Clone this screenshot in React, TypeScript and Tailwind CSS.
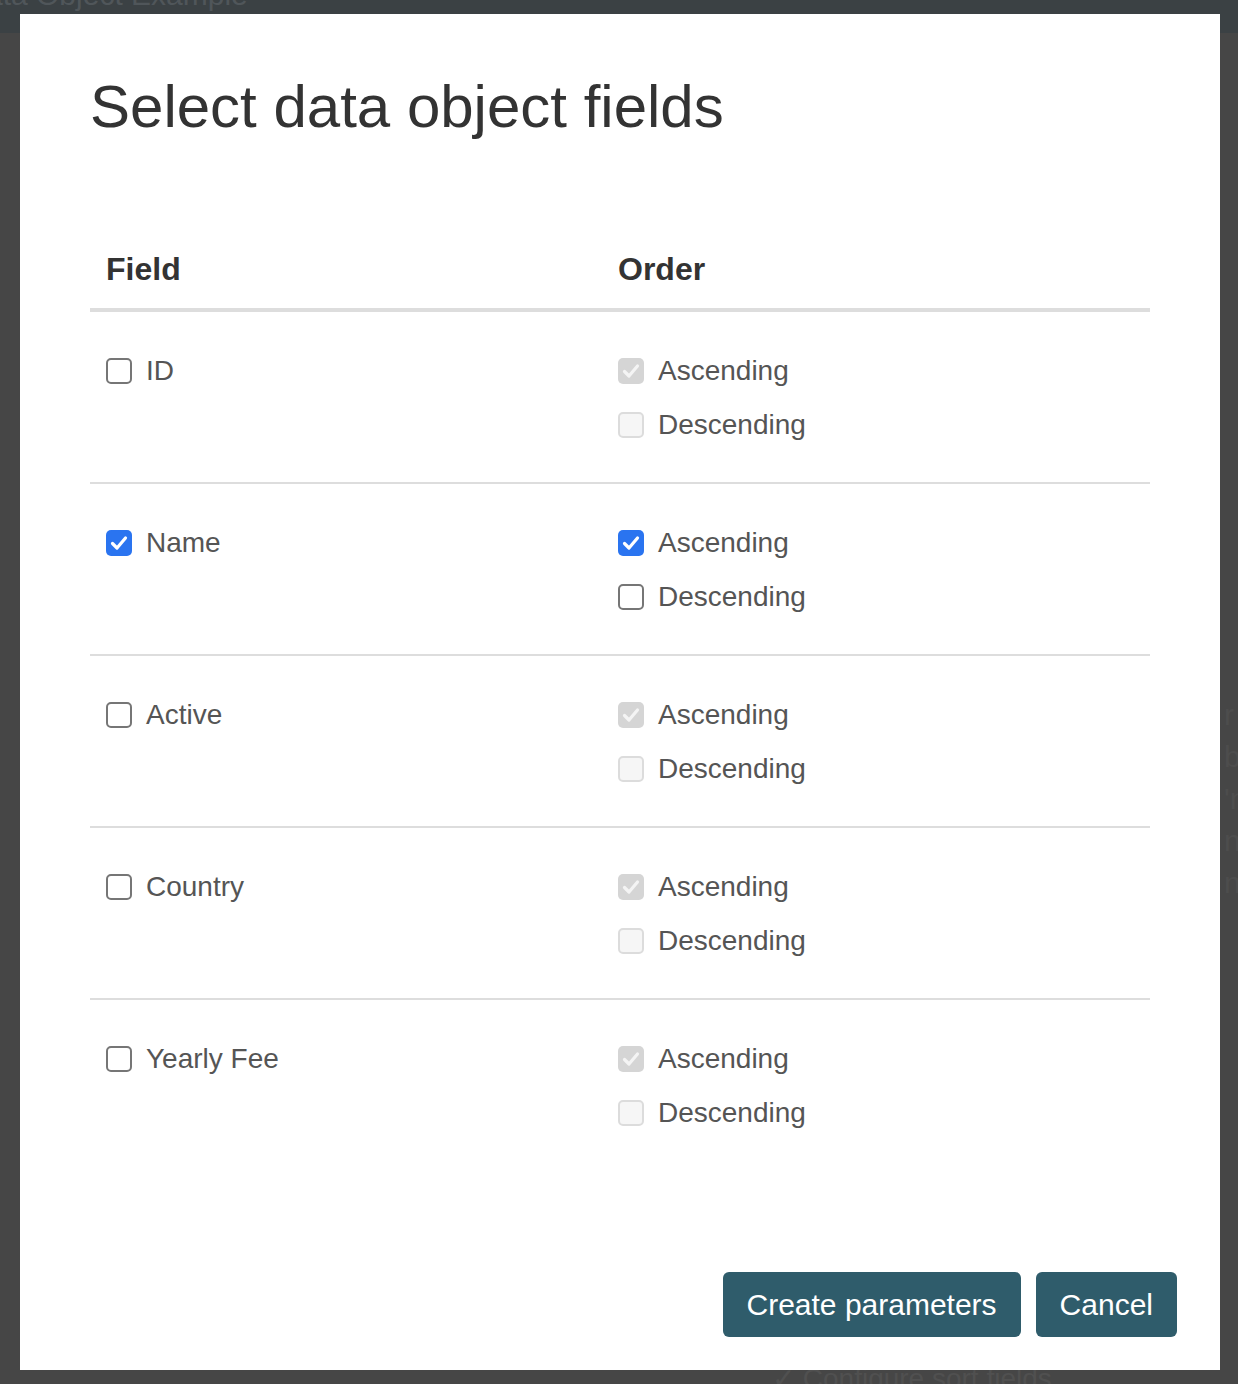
import React from 'react';

type BoxState = 'off' | 'on' | 'disabledOn' | 'disabledOff';

function Check({ color }: { color: string }) {
  return (
    <svg viewBox="0 0 26 26" className="w-[26px] h-[26px]">
      <path d="M6.5 13.5 L11 18 L19.5 8" fill="none" stroke={color} strokeWidth="3.2" strokeLinecap="round" strokeLinejoin="round" />
    </svg>
  );
}

function Box({ state }: { state: BoxState }) {
  if (state === 'on') {
    return (
      <span className="w-[26px] h-[26px] rounded-[5px] bg-[#2a74f0] flex shrink-0">
        <Check color="#ffffff" />
      </span>
    );
  }
  if (state === 'disabledOn') {
    return (
      <span className="w-[26px] h-[26px] rounded-[5px] bg-[#d5d5d5] flex shrink-0">
        <Check color="#f4f4f4" />
      </span>
    );
  }
  if (state === 'disabledOff') {
    return <span className="w-[26px] h-[26px] rounded-[5px] bg-[#f6f6f6] border-2 border-[#dcdcdc] shrink-0" />;
  }
  return <span className="w-[26px] h-[26px] rounded-[5px] bg-white border-2 border-[#767676] shrink-0" />;
}

function Option({ state, label }: { state: BoxState; label: string }) {
  return (
    <div className="h-10 flex items-center gap-[14px] text-[28px] leading-10 text-[#555555]">
      <Box state={state} />
      <span>{label}</span>
    </div>
  );
}

const fields = [
  { name: 'ID', checked: false },
  { name: 'Name', checked: true },
  { name: 'Active', checked: false },
  { name: 'Country', checked: false },
  { name: 'Yearly Fee', checked: false },
];

export default function App() {
  return (
    <div
      className="relative w-full h-[1384px] overflow-hidden bg-[#464646]"
      style={{ fontFamily: '"Liberation Sans", Arial, sans-serif' }}
    >
      {/* page behind the backdrop */}
      <div className="absolute top-0 left-0 right-0 h-[33px] bg-[#3b4144] overflow-hidden">
        <span className="absolute left-[-14px] top-[-28px] text-[30px] text-[#50565a]">ata Object Example</span>
      </div>
      <span className="absolute left-[772px] top-[1358px] text-[28px] text-[#505050]">✓ Configure sort fields</span>
      <div className="absolute left-[1224px] top-[700px] flex flex-col gap-[12px] text-[30px] leading-[30px] text-[#4d4d4d]">
        <span>r f</span>
        <span>bje</span>
        <span>'n</span>
        <span>n</span>
        <span>ns</span>
      </div>

      <div className="relative mt-[14px] ml-[20px] w-[1200px] h-[1356px] bg-white flex flex-col">
        <h1 className="px-[70px] mt-[60px] text-[60px] leading-[66px] text-[#333333]">Select data object fields</h1>

        <div className="mx-[70px] mt-[90px]">
          <div className="grid grid-cols-[512px_1fr] border-b-4 border-[#dddddd] text-[32px] leading-[46px] font-bold text-[#333333]">
            <div className="px-4 pt-4 pb-[16px]">Field</div>
            <div className="px-4 pt-4 pb-[16px]">Order</div>
          </div>
          {fields.map((f, i) => (
            <div
              key={f.name}
              className={`grid grid-cols-[512px_1fr] pt-[39px] pb-[37px] ${i < fields.length - 1 ? 'border-b-2 border-[#dddddd]' : ''}`}
            >
              <div className="px-4">
                <Option state={f.checked ? 'on' : 'off'} label={f.name} />
              </div>
              <div className="px-4 flex flex-col gap-[14px]">
                <Option state={f.checked ? 'on' : 'disabledOn'} label="Ascending" />
                <Option state={f.checked ? 'off' : 'disabledOff'} label="Descending" />
              </div>
            </div>
          ))}
        </div>

        <div className="mt-auto pr-[43px] pb-[33px] flex justify-end gap-[15px]">
          <button className="h-[65px] px-6 rounded-[6px] bg-[#2f5c6b] text-white text-[30px]">Create parameters</button>
          <button className="h-[65px] px-6 rounded-[6px] bg-[#2f5c6b] text-white text-[30px]">Cancel</button>
        </div>
      </div>
    </div>
  );
}
